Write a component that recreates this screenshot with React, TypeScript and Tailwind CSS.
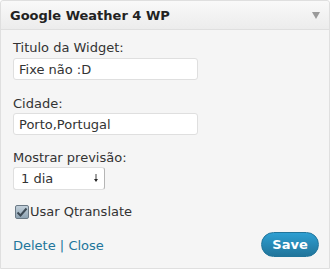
export default function App() {
  return (
    <div className="w-[332px] h-[270px] bg-white font-['DejaVu_Sans',sans-serif]">
      <div className="w-[330px] h-[269px] border border-[#dfdfdf] rounded-t-[3px] bg-[#f5f5f5] flex flex-col">
        {/* header */}
        <div className="h-[29px] shrink-0 flex items-center justify-between pl-[9px] pr-[9px] border-b border-[#dfdfdf] bg-gradient-to-b from-[#f9f9f9] to-[#ececec] rounded-t-[3px]">
          <span className="text-[13px] font-bold text-[#222] leading-none">Google Weather 4 WP</span>
          <svg width="8" height="7" viewBox="0 0 8 7">
            <path d="M0 0 L8 0 L4 7 Z" fill="#9a9a9a" />
          </svg>
        </div>

        <div className="flex flex-col pl-[12px] pr-[10px] pt-[10px] text-[13px] text-[#333]">
          <label className="leading-[16px]">Titulo da Widget:</label>
          <input
            defaultValue="Fixe não :D"
            className="mt-[2px] w-[185px] h-[22px] px-[5px] bg-white border border-[#dfdfdf] rounded-[3px] text-[13px] text-[#333] outline-none"
          />

          <label className="mt-[16px] leading-[16px]">Cidade:</label>
          <input
            defaultValue="Porto,Portugal"
            className="mt-[1px] w-[185px] h-[22px] px-[5px] bg-white border border-[#dfdfdf] rounded-[3px] text-[13px] text-[#333] outline-none"
          />

          <label className="mt-[15px] leading-[16px]">Mostrar previsão:</label>
          <div className="mt-[1px] w-[92px] h-[23px] bg-white border border-[#dfdfdf] border-r-[#b5b5b5] rounded-[3px] flex items-center justify-between pl-[7px] pr-[6px]">
            <span>1 dia</span>
            <svg width="4" height="9" viewBox="0 0 4 9">
              <path d="M2 0 L2 6" stroke="#444" strokeWidth="1" />
              <path d="M0 5 L4 5 L2 8 Z" fill="#222" />
            </svg>
          </div>

          <label className="mt-[14px] h-[16px] flex items-center">
            <span className="w-[14px] h-[14px] ml-[2px] rounded-[2px] border border-[#6b7a86] bg-gradient-to-b from-[#c4d1db] to-[#8ea3b3] flex items-center justify-center">
              <svg width="12" height="11" viewBox="0 0 12 11">
                <path d="M1.5 5.5 L4.5 8.5 L10.5 1.5" stroke="#3d4a55" strokeWidth="2" fill="none" />
              </svg>
            </span>
            <span className="ml-[1px] leading-[16px]">Usar Qtranslate</span>
          </label>

          <div className="mt-[12px] flex items-center justify-between">
            <span className="text-[#21759b] leading-[16px] mt-[2px]">
              Delete <span className="text-[#21759b]">|</span> Close
            </span>
            <button className="w-[58px] h-[25px] rounded-full border border-[#21759b] bg-gradient-to-b from-[#2e9fd2] to-[#21759b] text-white font-bold text-[13px] leading-none">
              Save
            </button>
          </div>
        </div>
      </div>
    </div>
  );
}
